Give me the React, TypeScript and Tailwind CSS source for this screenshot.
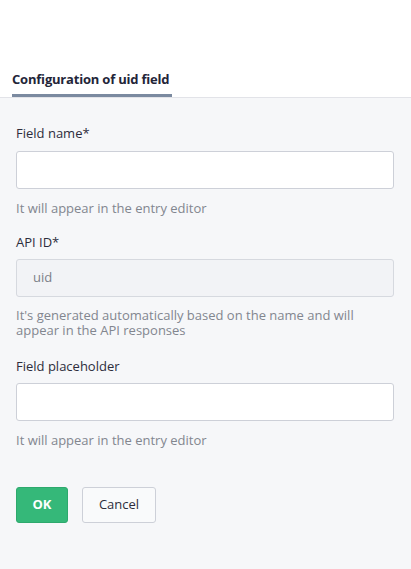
import React from "react";

export default function App() {
  return (
    <div className="min-h-[569px] w-[411px] bg-[#f6f7f9] font-['Open_Sans',sans-serif] text-[13px] text-[#2d2d3c]">
      <div className="h-[98px] bg-white border-b border-[#e2e3e8] flex items-end px-3">
        <div className="w-[160px] border-b-[3px] border-[#7b8aa0] pb-[5px] whitespace-nowrap">
          <span className="font-bold text-[#232538] text-[13px] tracking-[-0.2px]">Configuration of uid field</span>
        </div>
      </div>
      <div className="px-4 pt-[26px]">
        <div className="leading-[18px]">Field name*</div>
        <input className="mt-[9px] block w-[378px] h-[38px] bg-white border border-[#cdd0d8] rounded-[3px] px-4 outline-none" />
        <div className="mt-[10px] leading-[18px] text-[#82868f]">It will appear in the entry editor</div>

        <div className="mt-[16px] leading-[18px]">API ID*</div>
        <div className="mt-[8px] w-[378px] h-[38px] bg-[#f2f3f6] border border-[#d6d9df] rounded-[3px] px-4 flex items-center text-[#7c7f88]">uid</div>
        <div className="mt-[11px] leading-[15px] text-[#82868f] w-[340px]">It's generated automatically based on the name and will appear in the API responses</div>

        <div className="mt-[19px] leading-[18px]">Field placeholder</div>
        <input className="mt-[8px] block w-[378px] h-[38px] bg-white border border-[#cdd0d8] rounded-[3px] px-4 outline-none" />
        <div className="mt-[10px] leading-[18px] text-[#82868f]">It will appear in the entry editor</div>

        <div className="mt-[38px] flex gap-[14px]">
          <button className="w-[52px] h-[36px] bg-[#35b879] border border-[#2ea96d] rounded-[3px] text-white font-bold">OK</button>
          <button className="w-[74px] h-[36px] bg-[#f9fafb] border border-[#cdd0d8] rounded-[3px] text-[#2d2d3c]">Cancel</button>
        </div>
      </div>
    </div>
  );
}
